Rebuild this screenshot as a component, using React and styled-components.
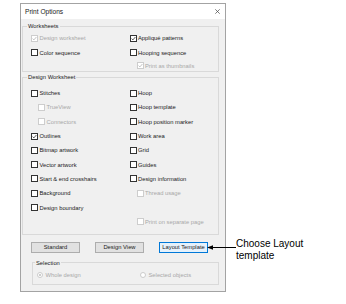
import React from "react"
import styled, { createGlobalStyle } from "styled-components"

const GlobalStyle = createGlobalStyle`
  html, body {
    margin: 0;
    padding: 0;
    background: #ffffff;
  }
  body {
    font-family: "Liberation Sans", Arial, sans-serif;
  }
`;

const Page = styled.div`
  width: 346px;
  height: 304px;
  box-sizing: border-box;
  padding: 3px 0 0 20px;
  display: flex;
  align-items: flex-start;
`;

const Dialog = styled.div`
  width: 206px;
  height: 289px;
  box-sizing: border-box;
  border: 1px solid #a3a3a3;
  background: #f0f0f0;
  display: flex;
  flex-direction: column;
  flex: none;
`;

const TitleBar = styled.div`
  height: 15px;
  background: #ffffff;
  display: flex;
  align-items: center;
  justify-content: space-between;
  padding: 0 5px 0 4px;
  font-size: 6.6px;
  color: #1a1a1a;
`;

const Body = styled.div`
  flex: 1;
  display: flex;
  flex-direction: column;
  padding: 3px 6px 0 1px;
`;

const Group = styled.fieldset`
  margin: ${props => props.$margin || "0"};
  padding: 0;
  border: 1px solid #d9d9d9;
  min-width: 0;
`;

const Legend = styled.legend`
  margin-left: ${props => props.$offset || 4}px;
  padding: 0 1px;
  font-size: 5.8px;
  line-height: 8px;
  color: #1a1a1a;
`;

const CheckGrid = styled.div`
  display: grid;
  grid-template-columns: ${props => props.$col}px 1fr;
  grid-template-rows: ${props => props.$rows || "none"};
  grid-auto-rows: ${props => props.$row || 14}px;
  padding: ${props => props.$pad};
`;

const Item = styled.div`
  display: flex;
  align-items: center;
  gap: 1.5px;
  padding-left: ${props => (props.$indent ? 7 : 0)}px;
  font-size: 5.8px;
  color: ${props => (props.$disabled ? "#a8a8a8" : "#1a1a1a")};
  white-space: nowrap;
`;

const Box = styled.span`
  width: 7px;
  height: 7px;
  box-sizing: border-box;
  flex: none;
  border: 1px solid ${props => (props.$disabled ? "#cdcdcd" : "#333333")};
  background: #ffffff;
  display: flex;
  align-items: center;
  justify-content: center;
`;

const Round = styled.span`
  width: 6px;
  height: 6px;
  box-sizing: border-box;
  flex: none;
  border-radius: 50%;
  border: 1px solid #cccccc;
  background: #ffffff;
  display: flex;
  align-items: center;
  justify-content: center;
  margin-right: 1px;
`;

const Dot = styled.span`
  width: 2px;
  height: 2px;
  border-radius: 50%;
  background: #bdbdbd;
`;

const ButtonRow = styled.div`
  display: flex;
  gap: 15px;
  margin: 7px 0 0 9px;
`;

const Button = styled.button`
  width: 49px;
  height: 11px;
  box-sizing: border-box;
  padding: 0;
  font-family: "Liberation Sans", Arial, sans-serif;
  font-size: 5.8px;
  color: #1a1a1a;
  background: ${props => (props.$focused ? "#e5f1fb" : "#e1e1e1")};
  border: 1px solid ${props => (props.$focused ? "#0078d7" : "#adadad")};
`;

const Callout = styled.div`
  display: flex;
  align-items: flex-start;
  margin: 235px 0 0 -19px;
`;

const CalloutText = styled.div`
  font-size: 10px;
  line-height: 12px;
  color: #000000;
  white-space: nowrap;
`;

const Check = ({ label, checked, disabled, indent }) => (
  <Item $disabled={disabled} $indent={indent}>
    <Box $disabled={disabled}>
      {checked && (
        <svg width="5" height="5" viewBox="0 0 5 5">
          <polyline
            points="0.6,2.6 1.9,3.9 4.4,1"
            fill="none"
            stroke={disabled ? "#b5b5b5" : "#333333"}
            strokeWidth="0.8"
          />
        </svg>
      )}
    </Box>
    {label}
  </Item>
);

const Radio = ({ label, checked }) => (
  <Item $disabled>
    <Round>{checked && <Dot />}</Round>
    {label}
  </Item>
);

const App = () => {
  return (
    <Page>
      <GlobalStyle />
      <Dialog>
        <TitleBar>
          <span>Print Options</span>
          <svg width="5" height="5" viewBox="0 0 5 5">
            <path d="M0.3 0.3 L4.7 4.7 M4.7 0.3 L0.3 4.7" stroke="#444" strokeWidth="0.7" />
          </svg>
        </TitleBar>
        <Body>
          <Group>
            <Legend>Worksheets</Legend>
            <CheckGrid $col={98.5} $rows="14px 15px 11px" $pad="1px 0 0 8px">
              <Check label="Design worksheet" checked disabled />
              <Check label="Appliqué patterns" checked />
              <Check label="Color sequence" />
              <Check label="Hooping sequence" />
              <span />
              <Check label="Print as thumbnails" checked disabled indent />
            </CheckGrid>
          </Group>

          <Group $margin="1px 0 0 0">
            <Legend>Design Worksheet</Legend>
            <CheckGrid $col={98.5} $row={14.3} $pad="5px 0 5px 8px">
              <Check label="Stitches" />
              <Check label="Hoop" />
              <Check label="TrueView" disabled indent />
              <Check label="Hoop template" />
              <Check label="Connectors" disabled indent />
              <Check label="Hoop position marker" />
              <Check label="Outlines" checked />
              <Check label="Work area" />
              <Check label="Bitmap artwork" />
              <Check label="Grid" />
              <Check label="Vector artwork" />
              <Check label="Guides" />
              <Check label="Start & end crosshairs" />
              <Check label="Design information" />
              <Check label="Background" />
              <Check label="Thread usage" disabled indent />
              <Check label="Design boundary" />
              <span />
              <span />
              <Check label="Print on separate page" disabled indent />
            </CheckGrid>
          </Group>

          <ButtonRow>
            <Button>Standard</Button>
            <Button>Design View</Button>
            <Button $focused>Layout Template</Button>
          </ButtonRow>

          <Group $margin="6px 0 0 10px">
            <Legend $offset={2}>Selection</Legend>
            <CheckGrid $col={103} $row={12} $pad="2px 0 3px 4px">
              <Radio label="Whole design" checked />
              <Radio label="Selected objects" />
            </CheckGrid>
          </Group>
        </Body>
      </Dialog>

      <Callout>
        <svg width="29" height="12" viewBox="0 0 29 12">
          <line x1="4" y1="9.5" x2="29" y2="9.5" stroke="#000" strokeWidth="1" />
          <polygon points="0,9.5 6,7.3 6,11.7" fill="#000" />
        </svg>
        <CalloutText>
          Choose Layout
          <br />
          template
        </CalloutText>
      </Callout>
    </Page>
  )
}

export default App
